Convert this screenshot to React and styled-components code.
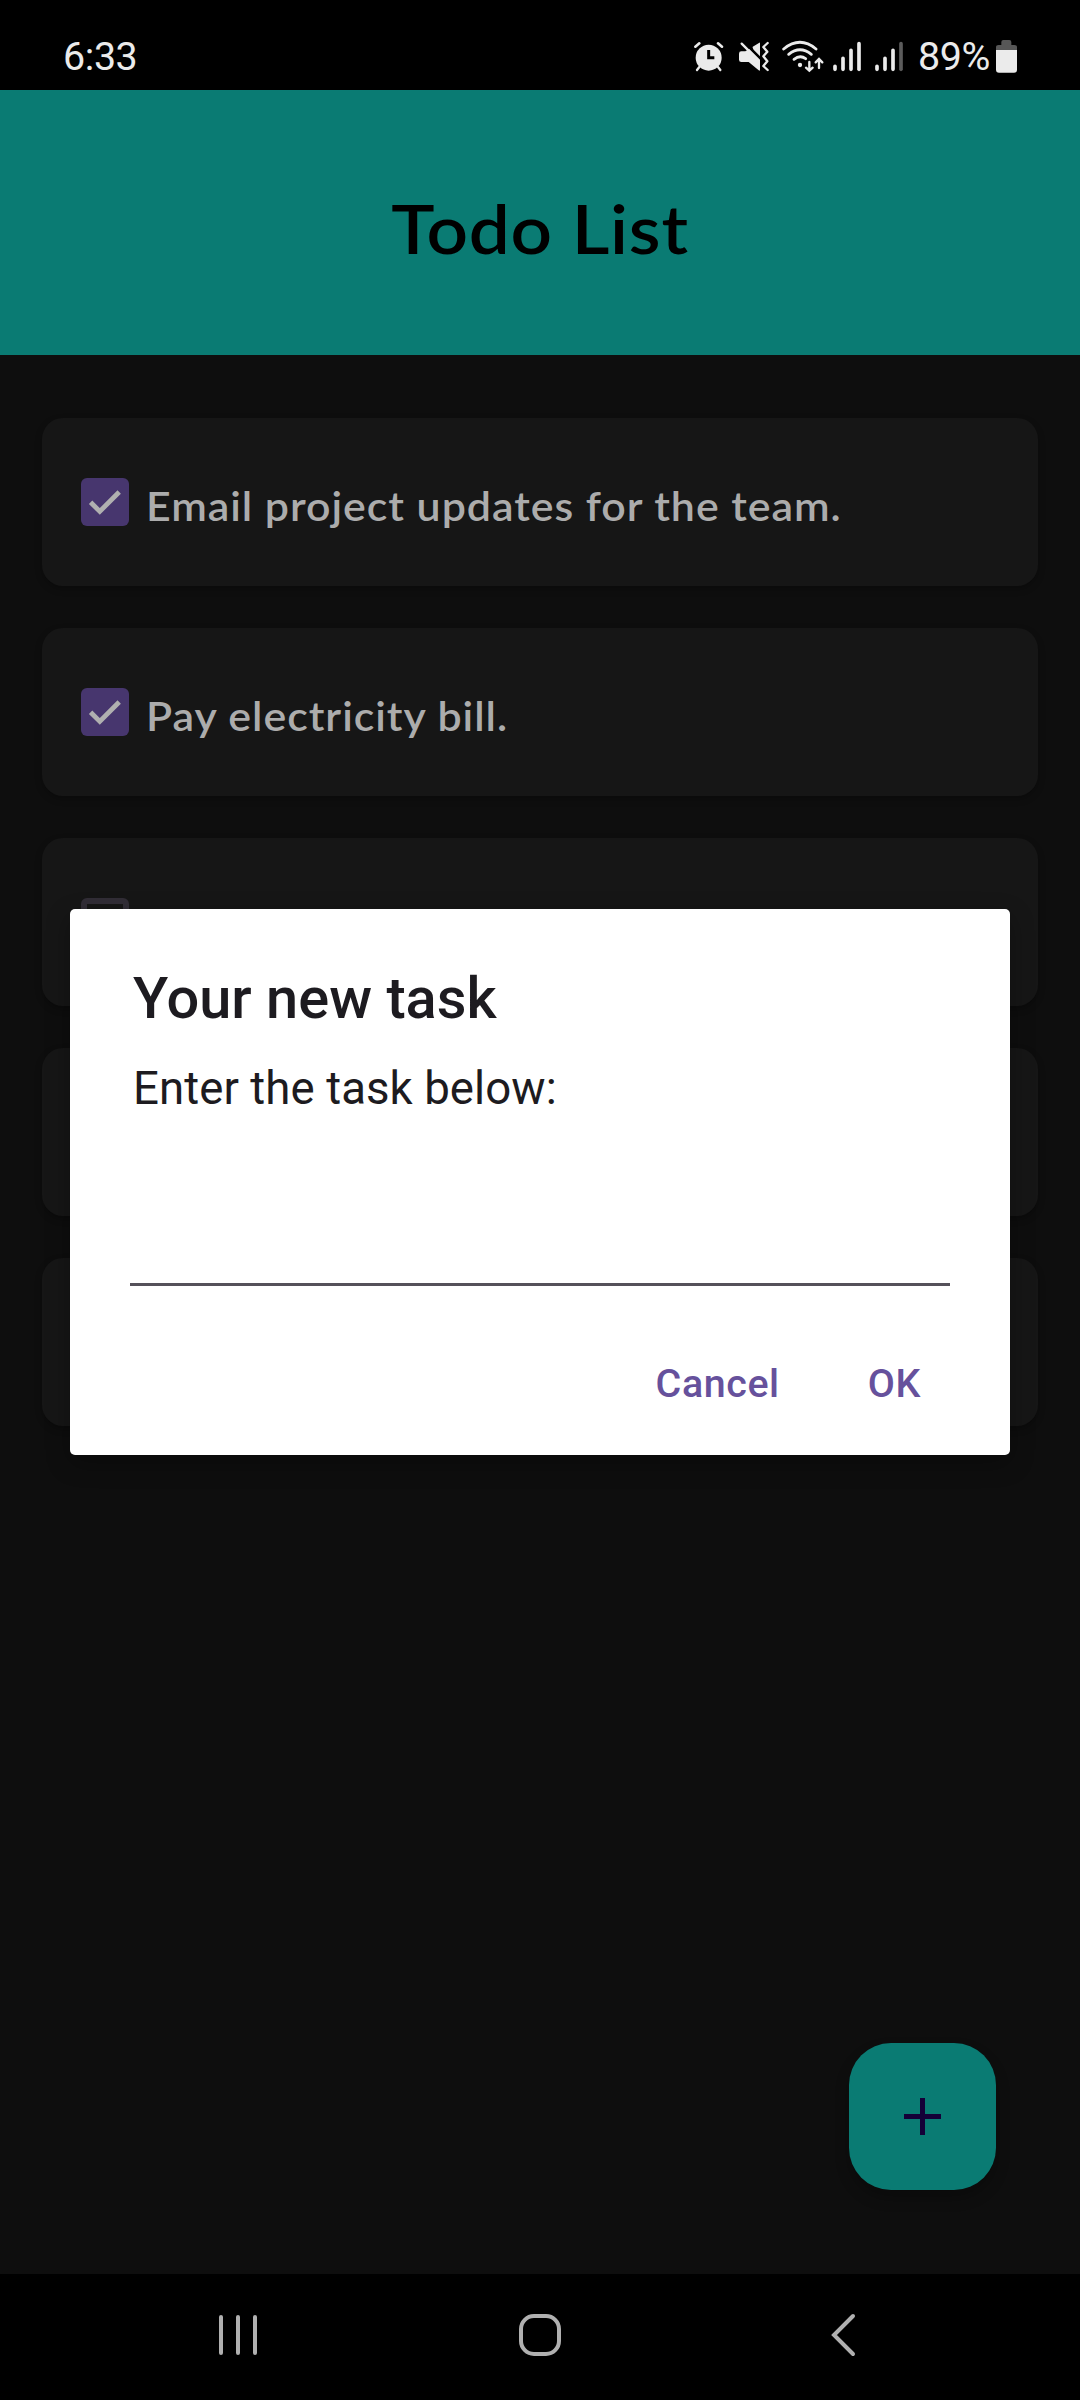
import React from "react";
import styled, { createGlobalStyle } from "styled-components";

const Global = createGlobalStyle`
  * { box-sizing: border-box; }
  body { margin: 0; background: #000; }
  button { border: 0; background: none; padding: 0; font: inherit; }
`;

const Screen = styled.div`
  position: relative;
  width: 1080px;
  height: 2400px;
  display: flex;
  flex-direction: column;
  overflow: hidden;
  background: #0e0e0e;
  font-family: Roboto, "Liberation Sans", sans-serif;
`;

const StatusBar = styled.div`
  height: 90px;
  padding: 23px 62px 0 63px;
  display: flex;
  align-items: flex-start;
  justify-content: space-between;
  background: #000;
  color: #ebebeb;
`;

const StatusText = styled.span`
  display: block;
  padding-top: 1px;
  font-size: 39.4px;
  line-height: 66px;
  letter-spacing: -0.4px;
  white-space: nowrap;
`;

const StatusIcons = styled.div`
  display: flex;
  align-items: flex-start;
`;

const StatusIcon = styled.svg`
  display: block;
  flex: none;
  height: 33px;
  width: ${(p) => p.$w}px;
  margin: 17px ${(p) => p.$after || 0}px 0 0;
`;

const Percent = styled.div`
  width: 77px;
`;

const Header = styled.header`
  height: 265px;
  display: flex;
  align-items: center;
  justify-content: center;
  background: #0a7b73;
`;

const Heading = styled.h1`
  margin: 11px 0 0;
  font-family: Lato, sans-serif;
  font-weight: 600;
  font-size: 68px;
  line-height: 80px;
  letter-spacing: 0.7px;
  transform: scaleX(1.07);
  color: #000;
`;

const List = styled.main`
  flex: 1;
  display: flex;
  flex-direction: column;
  gap: 42px;
  padding: 63px 42px 0;
`;

const Card = styled.div`
  height: 168px;
  flex: none;
  display: flex;
  align-items: center;
  gap: 17px;
  padding: 0 39px;
  border-radius: 21px;
  background: #161616;
  box-shadow: 0 3px 7px rgba(0, 0, 0, 0.25);
`;

const Box = styled.span`
  width: 48px;
  height: 48px;
  flex: none;
  border-radius: 6px;
  border: ${(p) => (p.$on ? "0" : "6px solid #312d36")};
  background: ${(p) => (p.$on ? "#47366e" : "transparent")};
`;

const Label = styled.span`
  padding-top: 7px;
  font-family: Lato, sans-serif;
  font-weight: 600;
  font-size: 40px;
  line-height: 48px;
  letter-spacing: 0.9px;
  transform: scaleX(1.072);
  transform-origin: left center;
  white-space: nowrap;
  color: #acacac;
`;

const Fab = styled.button`
  position: absolute;
  left: 849px;
  top: 2043px;
  width: 147px;
  height: 147px;
  display: flex;
  align-items: center;
  justify-content: center;
  border-radius: 42px;
  background: #0a7b73;
  box-shadow: 0 8px 14px rgba(0, 0, 0, 0.25);
`;

const NavBar = styled.nav`
  height: 126px;
  flex: none;
  display: flex;
  align-items: center;
  justify-content: space-between;
  padding: 0 213px 4px;
  background: #000;
`;

const Dialog = styled.section`
  position: absolute;
  left: 70px;
  top: 909px;
  width: 940px;
  height: 546px;
  display: flex;
  flex-direction: column;
  padding: 55px 60px 0;
  border-radius: 5px;
  background: #fff;
  box-shadow: 0 8px 24px rgba(0, 0, 0, 0.3);
  color: #1d1b20;
`;

const DialogTitle = styled.h2`
  margin: 0 0 0 3px;
  font-weight: 500;
  font-size: 57.75px;
  line-height: 68px;
`;

const DialogMessage = styled.p`
  margin: 30px 0 0 3px;
  font-size: 45.6px;
  line-height: 54px;
  letter-spacing: 0.07px;
`;

const Field = styled.div`
  height: 170px;
  border-bottom: 3px solid #55515a;
`;

const Actions = styled.div`
  display: flex;
  justify-content: flex-end;
  gap: 88px;
  margin-top: 74px;
  padding-right: 29px;
`;

const Action = styled.button`
  font-weight: 500;
  font-size: 39.4px;
  line-height: 48px;
  letter-spacing: 0.6px;
  color: #66519c;
`;

const tasks = [
  { text: "Email project updates for the team.", done: true },
  { text: "Pay electricity bill.", done: true },
  { text: "", done: false },
  { text: "", done: false },
  { text: "", done: false },
];

const Check = () => (
  <svg width="48" height="48" viewBox="0 0 48 48" fill="none">
    <path d="M9.6 24.3 18.8 33.4 38.2 14" stroke="#b0b0b0" strokeWidth="4.8" />
  </svg>
);

const Alarm = () => (
  <StatusIcon $w={31} $after={14} viewBox="39 60 93 99">
    <g stroke="#ebebeb" fill="none" strokeLinecap="round">
      <path d="M46 80 58 70M126 80 114 70" strokeWidth="8" />
      <path d="M58 141 51 150M114 141 121 150" strokeWidth="7" />
    </g>
    <circle cx="86" cy="113" r="39" fill="#ebebeb" />
    <path d="M86 90V113H103" stroke="#000" strokeWidth="9" fill="none" />
  </StatusIcon>
);

const Muted = () => (
  <StatusIcon $w={32} $after={11} viewBox="174 60 96 99">
    <path
      d="M184 94H196L238 68Q240 66 240 70V149Q240 154 236 151L206 126H184Q177 126 177 119V101Q177 94 184 94Z"
      fill="#ebebeb"
    />
    <path d="M190 64 248 122" stroke="#000" strokeWidth="8" />
    <path d="M180 62H212L222 96Z" fill="#000" />
    <path d="M185 71 236 122" stroke="#ebebeb" strokeWidth="7" strokeLinecap="round" />
    <path
      d="M263 69 250 81 262 95 250 109 262 124 250 138 263 150"
      fill="none"
      stroke="#ebebeb"
      strokeWidth="7"
      strokeLinejoin="round"
      strokeLinecap="round"
    />
  </StatusIcon>
);

const Wifi = () => (
  <StatusIcon $w={44} $after={7} viewBox="303 60 132 99">
    <g stroke="#ebebeb" fill="none" strokeWidth="8.5" strokeLinecap="round">
      <path d="M311 87Q360 47 408 87" />
      <path d="M326 103Q360 76 394 103" />
      <path d="M342 118Q360 104 377 116" />
      <path d="M388 126V151M378 143 388 152 398 143" strokeWidth="7" />
      <path d="M417 144V119M407 127 417 117 427 127" strokeWidth="7" />
    </g>
    <circle cx="360" cy="135" r="6.5" fill="#ebebeb" />
  </StatusIcon>
);

const Signal = ({ weak, after }) => (
  <StatusIcon $w={30} $after={after} viewBox="456 60 90 99">
    <g stroke="#ebebeb" strokeWidth="11" strokeLinecap="round">
      <path d="M465 139V148M489 115V148M513 91V148" />
      <path d="M537 71V148" stroke={weak ? "#5c5c5c" : "#ebebeb"} />
    </g>
  </StatusIcon>
);

const Battery = () => (
  <StatusIcon $w={23} viewBox="945 60 69 99">
    <path
      d="M948 91V82Q948 75 956 75H964V66Q964 60 970 60H988Q994 60 994 66V75H1003Q1011 75 1011 82V91Z"
      fill="#575757"
    />
    <path d="M948 90H1011V149Q1011 158 1002 158H957Q948 158 948 149Z" fill="#ebebeb" />
  </StatusIcon>
);

export default function App() {
  return (
    <Screen>
      <Global />
      <StatusBar>
        <StatusText>6:33</StatusText>
        <StatusIcons>
          <Alarm />
          <Muted />
          <Wifi />
          <Signal after={12} />
          <Signal weak after={14} />
          <Percent>
            <StatusText>89%</StatusText>
          </Percent>
          <Battery />
        </StatusIcons>
      </StatusBar>
      <Header>
        <Heading>Todo List</Heading>
      </Header>
      <List>
        {tasks.map((t, i) => (
          <Card key={i}>
            <Box $on={t.done}>{t.done && <Check />}</Box>
            {t.text && <Label>{t.text}</Label>}
          </Card>
        ))}
      </List>
      <NavBar>
        <svg width="50" height="46" viewBox="213 2312 50 46">
          <path
            d="M221 2317V2353M238 2317V2353M255 2317V2353"
            stroke="#b0b0b0"
            strokeWidth="4"
            strokeLinecap="round"
          />
        </svg>
        <svg width="46" height="46" viewBox="517 2312 46 46">
          <rect x="521" y="2316" width="38" height="38" rx="13" fill="none" stroke="#b0b0b0" strokeWidth="4" />
        </svg>
        <svg width="50" height="46" viewBox="817 2312 50 46">
          <path
            d="M853 2316 834 2335 853 2354"
            fill="none"
            stroke="#b0b0b0"
            strokeWidth="4"
            strokeLinecap="round"
          />
        </svg>
      </NavBar>
      <Fab aria-label="Add task">
        <svg width="37" height="37" viewBox="0 0 37 37">
          <path d="M18.5 0V37M0 18.5H37" stroke="#140038" strokeWidth="5" />
        </svg>
      </Fab>
      <Dialog role="dialog">
        <DialogTitle>Your new task</DialogTitle>
        <DialogMessage>Enter the task below:</DialogMessage>
        <Field />
        <Actions>
          <Action>Cancel</Action>
          <Action>OK</Action>
        </Actions>
      </Dialog>
    </Screen>
  );
}
